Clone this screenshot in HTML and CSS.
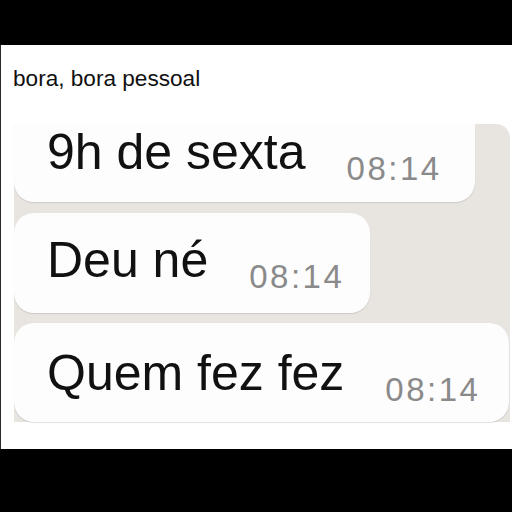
FILE: index.html
```html
<!DOCTYPE html>
<html lang="pt">
<head>
<meta charset="utf-8">
<title>bora, bora pessoal</title>
<link rel="stylesheet" href="styles.css">
</head>
<body>
<div class="bar"></div>
<main class="card">
  <p class="caption">bora, bora pessoal</p>
  <section class="chat">
    <div class="bubble bubble-first w1"><span class="msg">9h de sexta</span><span class="time">08:14</span></div>
    <div class="bubble w2 p2"><span class="msg">Deu né</span><span class="time">08:14</span></div>
    <div class="bubble w3 p3"><span class="msg">Quem fez fez</span><span class="time">08:14</span></div>
  </section>
</main>
<div class="bar bar-bottom"></div>
</body>
</html>
```
FILE: styles.css
```css
html, body {
  margin: 0;
  padding: 0;
}
body {
  background: #000;
  width: 512px;
  height: 512px;
  overflow: hidden;
  font-family: "Liberation Sans", Arial, sans-serif;
}
.bar {
  height: 45px;
  background: #000;
}
.bar-bottom {
  height: 63px;
}
.card {
  height: 404px;
  box-sizing: border-box;
  background: #fff;
  border-left: 1px solid #2a2a2a;
  padding-top: 21px;
}
.caption {
  margin: 0 0 32px 12px;
  font-size: 22.6px;
  line-height: 26px;
  color: #111;
}
.chat {
  margin-left: 13px;
  width: 496px;
  height: 298px;
  background: #e8e5e1;
  border-radius: 0 14px 0 0;
  display: flex;
  flex-direction: column;
  gap: 10px;
}
.bubble {
  box-sizing: border-box;
  background: #fdfdfd;
  border-radius: 20px;
  padding-left: 33px;
  white-space: nowrap;
  font-size: 50px;
  line-height: 56px;
  color: #111;
  box-shadow: 0 1px 1px rgba(0, 0, 0, 0.12);
  flex: none;
}
.bubble-first {
  border-radius: 0 0 20px 20px;
  height: 78px;
  margin-bottom: 1px;
}
.w1 { width: 461px; }
.w2 { width: 356px; height: 100px; }
.w3 { width: 495px; height: 99px; }
.p2 { padding-top: 19px; }
.p3 { padding-top: 22px; }
.time {
  display: inline-block;
  margin-left: 41px;
  font-size: 33px;
  line-height: 1;
  letter-spacing: 2.5px;
  color: #8a8a8a;
  vertical-align: -11px;
}
```
